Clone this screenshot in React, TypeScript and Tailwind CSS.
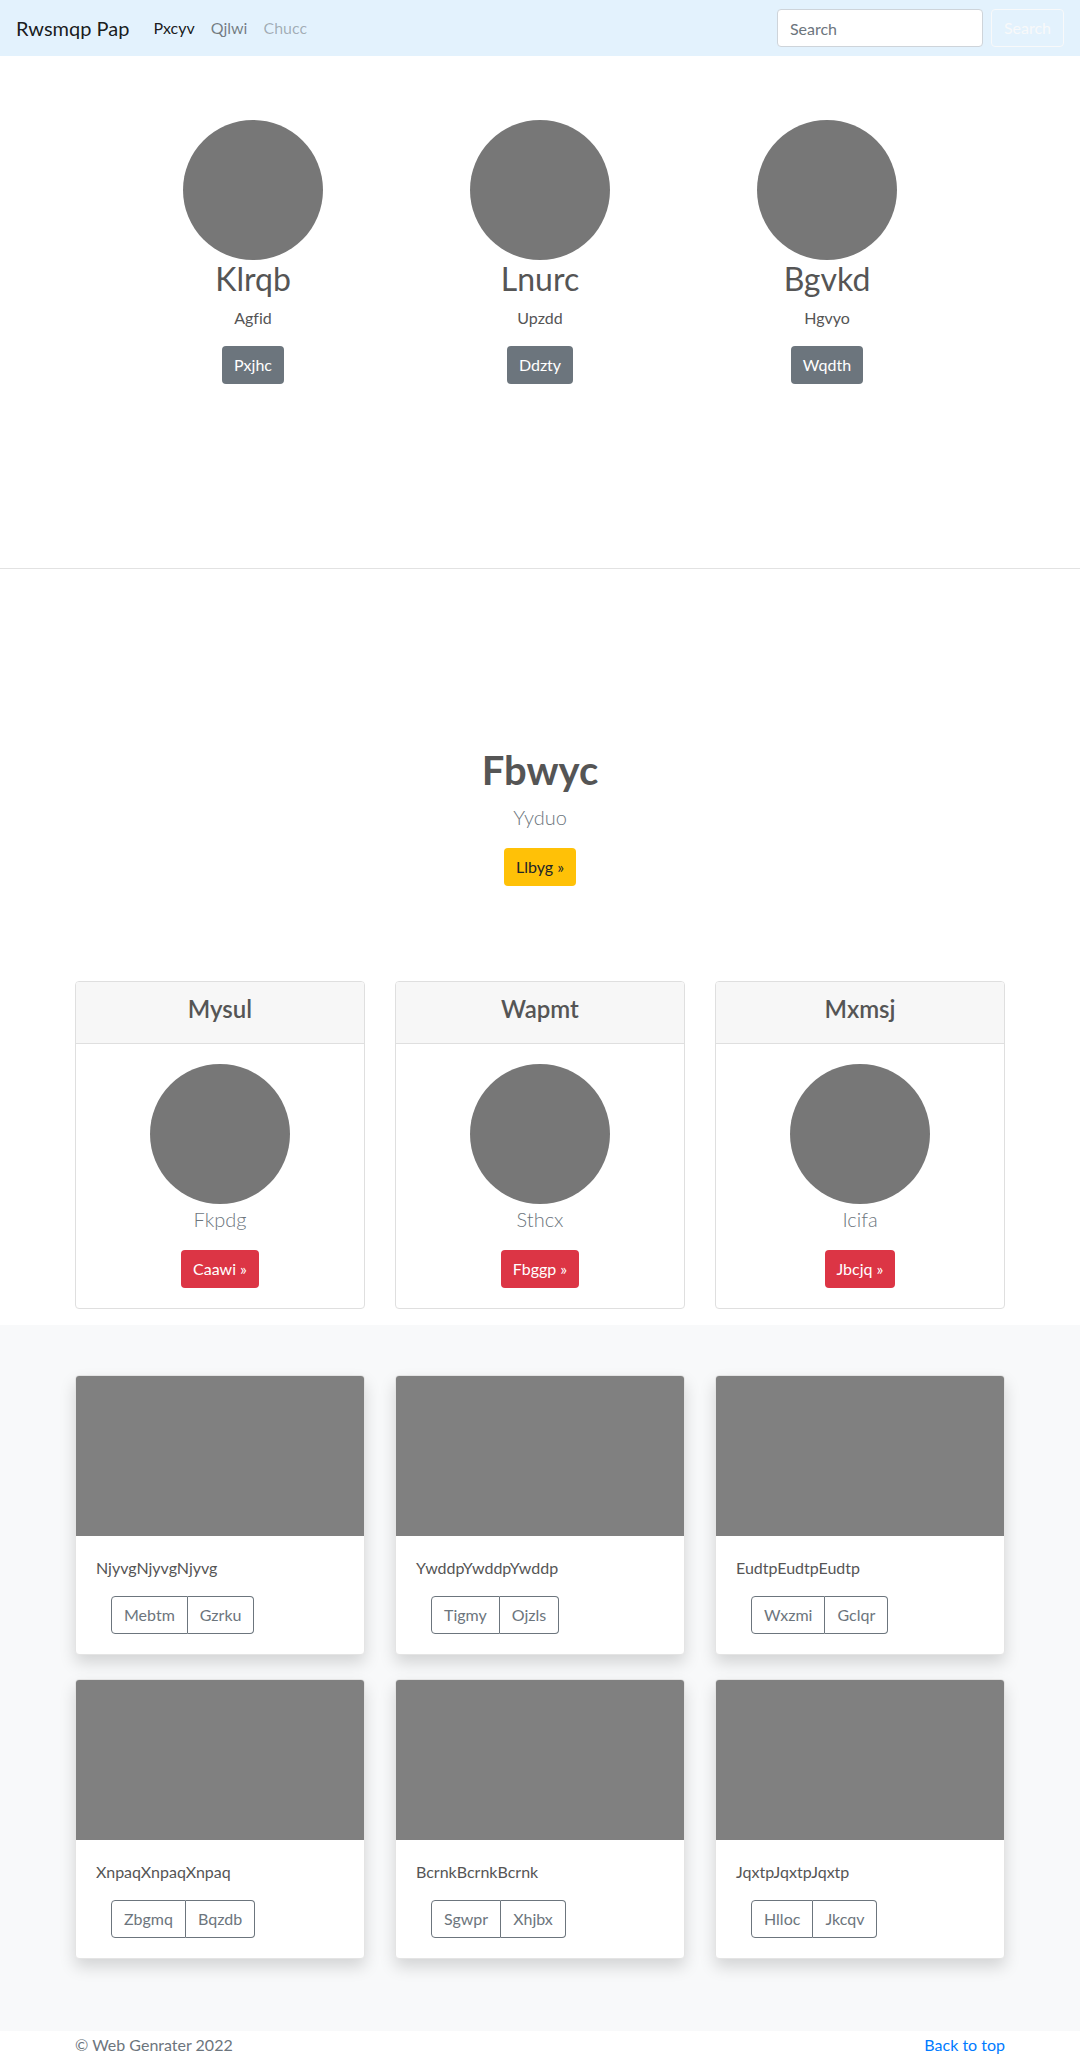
const people = [
  { name: "Klrqb", sub: "Agfid", btn: "Pxjhc" },
  { name: "Lnurc", sub: "Upzdd", btn: "Ddzty" },
  { name: "Bgvkd", sub: "Hgvyo", btn: "Wqdth" },
];

const plans = [
  { title: "Mysul", sub: "Fkpdg", btn: "Caawi »" },
  { title: "Wapmt", sub: "Sthcx", btn: "Fbggp »" },
  { title: "Mxmsj", sub: "Icifa", btn: "Jbcjq »" },
];

const albums = [
  { text: "NjyvgNjyvgNjyvg", a: "Mebtm", b: "Gzrku" },
  { text: "YwddpYwddpYwddp", a: "Tigmy", b: "Ojzls" },
  { text: "EudtpEudtpEudtp", a: "Wxzmi", b: "Gclqr" },
  { text: "XnpaqXnpaqXnpaq", a: "Zbgmq", b: "Bqzdb" },
  { text: "BcrnkBcrnkBcrnk", a: "Sgwpr", b: "Xhjbx" },
  { text: "JqxtpJqxtpJqxtp", a: "Hlloc", b: "Jkcqv" },
];

const App = () => {
  return (
    <div className="min-h-screen bg-white font-['Lato','Noto_Sans',sans-serif] [font-variant-ligatures:none] text-[16px] leading-[24px] text-[#555]">
      {/* navbar */}
      <nav className="h-[56px] bg-[#e3f2fd] px-4 flex items-center">
        <span className="text-[20px] leading-[30px] text-[rgba(0,0,0,0.9)] mr-4">Rwsmqp Pap</span>
        <a className="px-2 text-[rgba(0,0,0,0.9)]">Pxcyv</a>
        <a className="px-2 text-[rgba(0,0,0,0.5)]">Qjlwi</a>
        <a className="px-2 text-[rgba(0,0,0,0.3)]">Chucc</a>
        <div className="ml-auto flex items-center gap-2">
          <input
            className="w-[206px] h-[38px] px-3 bg-white border border-[#ced4da] rounded-[4px] text-[#495057] placeholder:text-[#6c757d] outline-none"
            placeholder="Search"
          />
          <button className="h-[38px] px-3 border border-[#f8f9fa] rounded-[4px] text-[#f8f9fa]">
            Search
          </button>
        </div>
      </nav>

      {/* circles */}
      <section className="pt-[64px] pb-[184px] border-b border-[#e2e2e2]">
        <div className="w-[861px] mx-auto grid grid-cols-3">
          {people.map((p) => (
            <div key={p.name} className="flex flex-col items-center text-center">
              <div className="w-[140px] h-[140px] rounded-full bg-[#777]" />
              <h2 className="text-[32px] leading-[38px] mb-2">{p.name}</h2>
              <p className="mb-4">{p.sub}</p>
              <button className="h-[38px] px-3 rounded-[4px] bg-[#6c757d] text-white">{p.btn}</button>
            </div>
          ))}
        </div>
      </section>

      {/* hero */}
      <section className="pt-[177px] text-center flex flex-col items-center">
        <h1 className="text-[40px] leading-[48px] font-bold mb-2">Fbwyc</h1>
        <p className="text-[20px] leading-[30px] font-light text-[#6c757d] mb-4">Yyduo</p>
        <button className="h-[38px] px-3 rounded-[4px] bg-[#ffc107] text-[#212529]">Llbyg »</button>
      </section>

      {/* pricing cards */}
      <section className="w-[930px] mx-auto mt-[95px] mb-4 grid grid-cols-3 gap-[30px]">
        {plans.map((c) => (
          <div key={c.title} className="border border-[#dfdfdf] rounded-[4px] overflow-hidden text-center">
            <div className="bg-[#f7f7f7] border-b border-[#dfdfdf] px-5 py-3">
              <h4 className="text-[24px] leading-[29px] font-semibold mb-2">{c.title}</h4>
            </div>
            <div className="p-5 flex flex-col items-center">
              <div className="w-[140px] h-[140px] rounded-full bg-[#777]" />
              <p className="text-[20px] leading-[30px] font-light text-[#6c757d] mb-4">{c.sub}</p>
              <button className="h-[38px] px-3 rounded-[4px] bg-[#dc3545] text-white">{c.btn}</button>
            </div>
          </div>
        ))}
      </section>

      {/* album */}
      <section className="bg-[#f8f9fa] pt-[50px] pb-[72px]">
        <div className="w-[930px] mx-auto grid grid-cols-3 gap-x-[30px] gap-y-[24px]">
          {albums.map((a) => (
            <div
              key={a.text}
              className="bg-white border border-[#e4e4e4] rounded-[4px] overflow-hidden shadow-[0_8px_16px_rgba(0,0,0,0.15)]"
            >
              <div className="h-[160px] bg-[#808080]" />
              <div className="p-5">
                <p className="mb-4">{a.text}</p>
                <div className="ml-[15px] inline-flex">
                  <button className="h-[38px] px-3 border border-[#6c757d] rounded-l-[4px] text-[#6c757d]">
                    {a.a}
                  </button>
                  <button className="h-[38px] px-3 border border-l-0 border-[#6c757d] rounded-r-[4px] text-[#6c757d]">
                    {a.b}
                  </button>
                </div>
              </div>
            </div>
          ))}
        </div>
      </section>

      {/* footer */}
      <footer className="w-[930px] mx-auto pt-[2px] pb-12 flex justify-between text-[#6c757d]">
        <p>© Web Genrater 2022</p>
        <a className="text-[#007bff]">Back to top</a>
      </footer>
    </div>
  );
};

export default App;
